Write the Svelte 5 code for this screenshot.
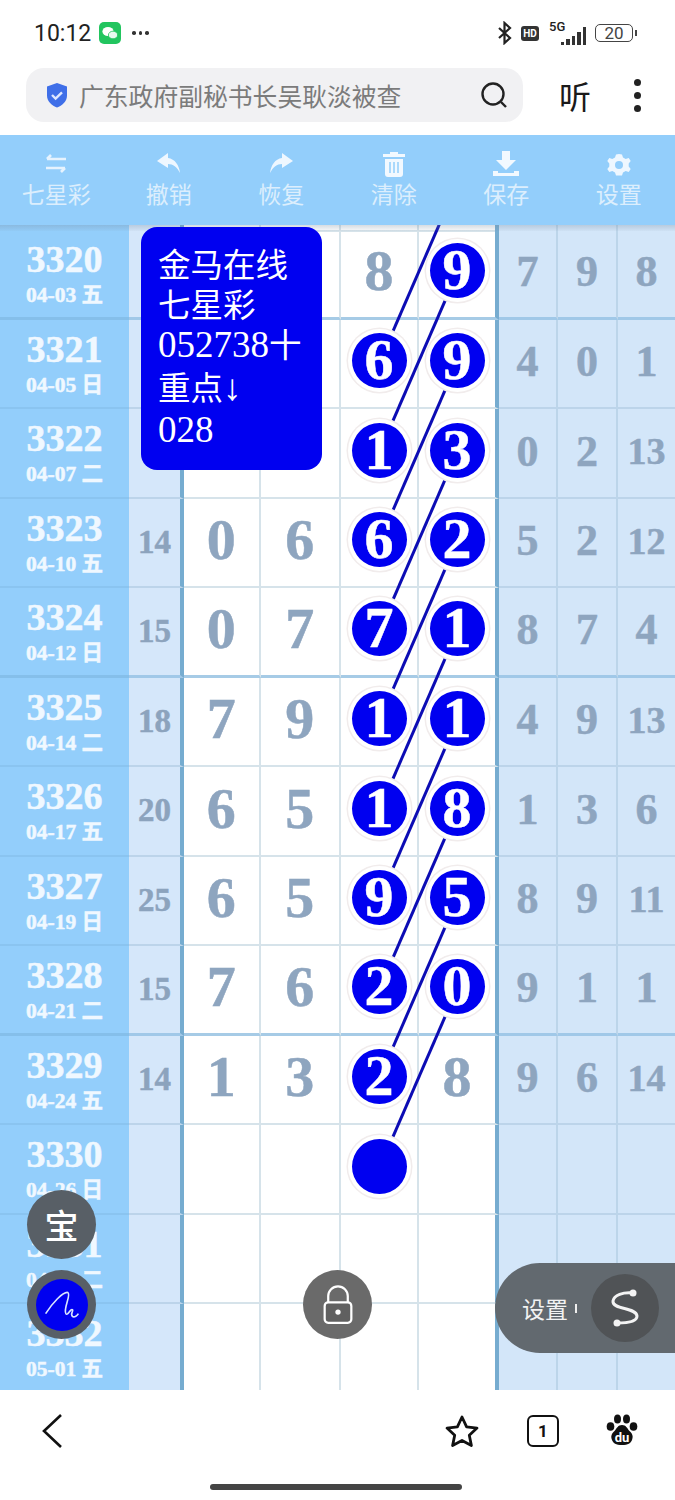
<script lang="ts">
  // rows of the trend table: [issue, date, sum, a, b, c, d, x, y, z]; * marks a drawn ball
  const rows = [
    ['3320', '04-03 五', '', '', '', '8', '9*', '7', '9', '8'],
    ['3321', '04-05 日', '', '', '', '6*', '9*', '4', '0', '1'],
    ['3322', '04-07 二', '', '', '', '1*', '3*', '0', '2', '13'],
    ['3323', '04-10 五', '14', '0', '6', '6*', '2*', '5', '2', '12'],
    ['3324', '04-12 日', '15', '0', '7', '7*', '1*', '8', '7', '4'],
    ['3325', '04-14 二', '18', '7', '9', '1*', '1*', '4', '9', '13'],
    ['3326', '04-17 五', '20', '6', '5', '1*', '8*', '1', '3', '6'],
    ['3327', '04-19 日', '25', '6', '5', '9*', '5*', '8', '9', '11'],
    ['3328', '04-21 二', '15', '7', '6', '2*', '0*', '9', '1', '1'],
    ['3329', '04-24 五', '14', '1', '3', '2*', '8', '9', '6', '14'],
    ['3330', '04-26 日', '', '', '', '*', '', '', '', ''],
    ['3331', '04-28 二', '', '', '', '', '', '', '', ''],
    ['3332', '05-01 五', '', '', '', '', '', '', '', ''],
  ].map((r) => ({
    issue: r[0],
    date: r[1],
    sum: r[2],
    a: r[3],
    b: r[4],
    c: r[5],
    d: r[6],
    right: r.slice(7),
  }))

  const tools = ['七星彩', '撤销', '恢复', '清除', '保存', '设置']

  const rowH = 89.5
  const top = 5
  const ballY = (i: number) => top + rowH * i + 41.6

  // each line runs from a ball in column d down to the ball two rows below in column c
  const links = [-1, 0, 1, 2, 3, 4, 5, 6, 7, 8].map((i) => ({
    y1: ballY(i),
    y2: ballY(i + 2),
  }))

  const isBall = (v: string) => v.endsWith('*')
  const num = (v: string) => v.replace('*', '')
</script>

<div class="phone">
  <div class="status">
    <span class="time">10:12</span>
    <svg class="wechat" viewBox="0 0 22 22" width="22" height="22">
      <rect width="22" height="22" rx="5" fill="#22c55f" />
      <ellipse cx="9" cy="9.500" rx="5.600" ry="4.600" fill="#fff" />
      <ellipse cx="14" cy="13" rx="4.600" ry="3.800" fill="#e9f9ef" stroke="#22c55f" stroke-width="0.800" />
    </svg>
    <span class="more">
      <i></i><i></i><i></i>
    </span>
    <span class="spacer"></span>
    <svg class="bt" viewBox="0 0 16 24" width="16" height="24">
      <path d="M2 7l11 10-5.500 5V2L13 7 2 17" fill="none" stroke="#222" stroke-width="2.200" />
    </svg>
    <span class="hd">HD</span>
    <span class="net">
      <span class="five-g">5G</span>
      <span class="bars"><i></i><i></i><i></i><i></i><i></i></span>
    </span>
    <span class="battery">20</span>
    <span class="nub"></span>
  </div>

  <div class="topbar">
    <div class="search">
      <svg viewBox="0 0 24 26" width="24" height="26">
        <path d="M12 1l10 3.500v9c0 6-5 10-10 12-5-2-10-6-10-12v-9z" fill="#3f6fe8" />
        <path d="M7 13l3.600 3.600L17 10.400" fill="none" stroke="#dfe8ff" stroke-width="2.400" />
      </svg>
      <span class="query">广东政府副秘书长吴耿淡被查</span>
      <svg class="lens" viewBox="0 0 28 28" width="28" height="28">
        <circle cx="13" cy="13" r="10.500" fill="none" stroke="#222" stroke-width="2.400" />
        <path d="M21 21l5 5" stroke="#222" stroke-width="2.400" />
      </svg>
    </div>
    <span class="listen">听</span>
    <span class="menu"><i></i><i></i><i></i></span>
  </div>

  <div class="tools">
    {#each tools as label, i}
      <div class="tool">
        <svg viewBox="0 0 28 26" width="28" height="26">
          {#if i === 0}
            <path d="M5 8h19M9 4L5 8M23 17H4M19 21l4-4" fill="none" stroke="#e6f3fe" stroke-width="2.600" />
          {:else if i === 1}
            <path d="M13 2L2 10l11 7v-4c5 0 9 3 12 9-1-8-5-14-12-15z" fill="#eef7ff" />
          {:else if i === 2}
            <path d="M15 2l11 8-11 7v-4C10 13 6 16 3 22c1-8 5-14 12-15z" fill="#eef7ff" />
          {:else if i === 3}
            <path d="M10 1h8v2h7v3H3V3h7zM5 8h18v15a3 3 0 0 1-3 3H8a3 3 0 0 1-3-3z" fill="#f2f9ff" />
            <path d="M10 11v11M14 11v11M18 11v11" stroke="#93cefb" stroke-width="1.500" />
          {:else if i === 4}
            <path d="M10 0h8v9h6L14 19 4 9h6zM1 20h5v2h16v-2h5v5H1z" fill="#f2f9ff" />
          {:else}
            <path d="M14 3l3 .5 1 3 2.700 1.500 3-1 2 3-2 2.500v3l2 2.500-2 3-3-1L18 21.500l-1 3h-6l-1-3-2.700-1.500-3 1-2-3 2-2.500v-3l-2-2.500 2-3 3 1L10 6.500l1-3z" fill="#eef7ff" />
            <circle cx="14" cy="14" r="4" fill="#93cefb" />
          {/if}
        </svg>
        <span>{label}</span>
      </div>
    {/each}
  </div>

  <div class="table">
    <div class="stub"><div class="side"></div><div class="sum"></div><div class="cell"></div><div class="cell"></div><div class="cell"></div><div class="cell end"></div><div class="r"></div><div class="r"></div><div class="r"></div></div>

    {#each rows as row, i}
      <div class="row" class:thick={i % 4 === 0}>
        <div class="side">
          <span class="issue">{row.issue}</span>
          <span class="date">{row.date}</span>
        </div>
        <div class="sum">{row.sum}</div>
        <div class="cell">{row.a}</div>
        <div class="cell">{row.b}</div>
        {#each [row.c, row.d] as v, k}
          <div class="cell" class:end={k === 1}>
            {#if isBall(v)}
              <span class="ball">{num(v)}</span>
            {:else}
              {v}
            {/if}
          </div>
        {/each}
        {#each row.right as v}
          <div class="r" class:small={v.length > 1}>{v}</div>
        {/each}
      </div>
    {/each}

    <svg class="links" width="675" height="1165" viewBox="0 0 675 1165">
      {#each links as l}
        <line x1="457.700" y1={l.y1} x2="380" y2={l.y2} />
      {/each}
    </svg>

    <div class="shade"></div>
  </div>

  <div class="nav">
    <svg class="back" viewBox="0 0 22 34" width="22" height="34">
      <path d="M20 1L3 17l17 16" fill="none" stroke="#111" stroke-width="2.600" />
    </svg>
    <span class="spacer"></span>
    <svg class="star" viewBox="0 0 36 34" width="36" height="34">
      <path d="M18 3l4.600 9.800 10.400 1.300-7.700 7.200 2.100 10.300L18 26.500 8.600 31.600l2.100-10.300L3 14.100l10.400-1.300z" fill="none" stroke="#111" stroke-width="2.800" stroke-linejoin="round" />
    </svg>
    <span class="tabs">1</span>
    <svg class="paw" viewBox="0 0 32 32" width="32" height="32">
      <ellipse cx="4.500" cy="12.500" rx="3.800" ry="4.300" fill="#111" />
      <ellipse cx="11.500" cy="5" rx="3.500" ry="4.500" fill="#111" />
      <ellipse cx="20.500" cy="5" rx="3.500" ry="4.500" fill="#111" />
      <ellipse cx="27.500" cy="12.500" rx="3.800" ry="4.300" fill="#111" />
      <path d="M16 11c4 0 5 3 7.500 6 3 3 4 5 2.500 9-1 3-4 5-10 5S7 29 6 26c-1.500-4-.5-6 2.500-9C11 14 12 11 16 11z" fill="#111" />
      <text x="16" y="28" class="du">du</text>
    </svg>
    <div class="home"></div>
  </div>

  <div class="note">
    <div>金马在线</div>
    <div>七星彩</div>
    <div><span class="dg">052738</span>十</div>
    <div>重点<span class="dg">↓</span></div>
    <div><span class="dg">028</span></div>
  </div>

  <div class="fab bao">宝</div>
  <div class="fab pen">
    <span class="pen-in">
      <svg viewBox="0 0 54 54" width="52" height="52">
        <path d="M10 36C17 25 28 13 33 14c4 2-5 17-2 22 2 3 5-6 7-4 1 2-3 4 0 7 2 1 5-1 6-3" fill="none" stroke="#d8e4ff" stroke-width="1.700" />
      </svg>
    </span>
  </div>
  <div class="fab lock">
    <svg viewBox="0 0 36 44" width="32" height="40">
      <path d="M7 19v-7a11 11 0 0 1 22 0v7" fill="none" stroke="#fff" stroke-width="2.500" />
      <rect x="3" y="19" width="30" height="23" rx="4" fill="#606060" stroke="#fff" stroke-width="2.500" />
      <circle cx="18" cy="30" r="3" fill="#fff" />
    </svg>
  </div>
  <div class="pill">
    <span class="pill-label">设置</span>
    <span class="tick"></span>
    <span class="s-btn">
      <svg viewBox="0 0 40 44" width="40" height="44">
        <path d="M28 7C18 6 9 9 8 15 7 24 31 21 32 30 32 36 22 37 12 37" fill="none" stroke="#f3f3f3" stroke-width="3" />
        <circle cx="28" cy="7" r="3.500" fill="#f3f3f3" />
        <circle cx="12" cy="37" r="3.500" fill="#f3f3f3" />
      </svg>
    </span>
  </div>
</div>

<style>
  :global(body) {
    margin: 0;
    background: #fff;
  }

  .phone {
    position: relative;
    width: 675px;
    height: 1500px;
    overflow: hidden;
    display: flex;
    flex-direction: column;
    font-family: 'Noto Sans CJK SC', 'Noto Sans', sans-serif;
  }

  .spacer {
    flex: 1;
  }

  .status {
    height: 66px;
    display: flex;
    align-items: center;
    padding: 0 38px 0 34px;
    color: #222;
  }

  .time {
    font: 23px Roboto, sans-serif;
    margin-right: 8px;
  }

  .more {
    display: flex;
    gap: 3px;
    margin-left: 11px;
  }

  .more i {
    width: 3.500px;
    height: 3.500px;
    border-radius: 50%;
    background: #333;
  }

  .bt {
    margin-right: 8px;
  }

  .hd {
    width: 18px;
    height: 15px;
    background: #333;
    border-radius: 3px;
    color: #fff;
    font: bold 10px/15px Roboto, sans-serif;
    text-align: center;
    margin-right: 9px;
  }

  .net {
    position: relative;
    width: 38px;
    height: 24px;
    margin-right: 9px;
  }

  .five-g {
    position: absolute;
    left: 1px;
    top: 0;
    font: 500 13px/12px Roboto, sans-serif;
    color: #222;
  }

  .bars {
    position: absolute;
    right: 0;
    bottom: 0;
    display: flex;
    align-items: flex-end;
    gap: 2px;
  }

  .bars i {
    width: 3.500px;
    background: #333;
  }

  .bars i:nth-child(1) { height: 3px; }
  .bars i:nth-child(2) { height: 6px; }
  .bars i:nth-child(3) { height: 9px; }
  .bars i:nth-child(4) { height: 13px; }
  .bars i:nth-child(5) { height: 18px; }

  .battery {
    width: 36px;
    height: 16px;
    border: 1.500px solid #444;
    border-radius: 5px;
    font: 17px/16px Roboto, sans-serif;
    color: #444;
    text-align: center;
  }

  .nub {
    width: 2px;
    height: 6px;
    margin-left: 2px;
    background: #444;
  }

  .topbar {
    height: 69px;
    padding: 2px 34px 13px 26px;
    box-sizing: border-box;
    display: flex;
    align-items: center;
  }

  .search {
    width: 497px;
    height: 54px;
    box-sizing: border-box;
    padding: 0 15px 0 19px;
    background: #f1f1f3;
    border-radius: 18px;
    display: flex;
    align-items: center;
  }

  .query {
    margin-left: 10px;
    flex: 1;
    font-size: 24.800px;
    color: #7b7b7b;
    white-space: nowrap;
  }

  .listen {
    margin-left: 36px;
    font-size: 32px;
    color: #1a1a1a;
  }

  .menu {
    margin-left: auto;
    display: flex;
    flex-direction: column;
    gap: 6px;
  }

  .menu i {
    width: 7px;
    height: 7px;
    border-radius: 50%;
    background: #222;
  }

  .tools {
    height: 90px;
    background: #93cefb;
    display: grid;
    grid-template-columns: repeat(6, 1fr);
    position: relative;
    z-index: 3;
  }

  .tool {
    display: flex;
    flex-direction: column;
    align-items: center;
    padding-top: 16px;
    color: #dceefd;
    font-size: 23px;
    line-height: 32px;
  }

  .table {
    position: relative;
    flex: 1;
    overflow: hidden;
    font-family: 'Liberation Serif', 'Noto Sans CJK SC', serif;
    font-weight: bold;
    background: #fff;
    -webkit-text-stroke: 0.500px currentColor;
  }

  .row,
  .stub {
    display: grid;
    grid-template-columns: 129px 55px 76.500px 80.500px 78px 80px 59px 60px 57px;
    height: 89.500px;
  }

  .stub {
    height: 5px;
  }

  .row > div,
  .stub > div {
    box-sizing: border-box;
    border-bottom: 2px solid #d6e3ea;
  }

  .row.thick > div {
    border-bottom: 3px solid #a6cbe6;
  }

  .row > .side,
  .stub > .side {
    border-bottom-color: #8ac4f0;
  }

  .row.thick > .side {
    border-bottom: 3px solid #85bfea;
  }

  .row > .sum,
  .row > .r,
  .stub > .sum,
  .stub > .r {
    border-bottom-color: #bcd4ea;
  }

  .row.thick > .sum,
  .row.thick > .r {
    border-bottom-color: #a0c8e8;
  }

  .side {
    background: #93cefb;
    color: #f0f8ff;
    display: flex;
    flex-direction: column;
    align-items: center;
  }

  .issue {
    font-size: 38px;
    line-height: 44px;
    margin-top: 7px;
  }

  .date {
    font-size: 21.500px;
    line-height: 26px;
    margin-top: 1px;
  }

  .sum {
    background: #d5e7fa;
    border-right: 4px solid #76acd0;
    color: #8ca3bd;
    font-size: 33px;
    display: flex;
    align-items: center;
    justify-content: center;
  }

  .cell {
    border-right: 2px solid #d6e3ea;
    color: #8ea5bf;
    font-size: 58px;
    display: flex;
    align-items: center;
    justify-content: center;
    padding-bottom: 5px;
  }

  .cell.end {
    border-right: 4px solid #76acd0;
  }

  .r {
    background: #d3e6f9;
    border-right: 2px solid #bcd5ea;
    color: #8ea5bf;
    font-size: 44px;
    display: flex;
    align-items: center;
    justify-content: center;
    padding-bottom: 3px;
  }

  .r:last-child {
    border-right: 0;
  }

  .r.small {
    font-size: 38px;
  }

  .ball {
    position: relative;
    z-index: 2;
    width: 55px;
    height: 55px;
    border-radius: 50%;
    background: #0000f0;
    color: #fff;
    font-size: 58px;
    line-height: 53px;
    text-align: center;
    box-shadow: 0 0 0 4px #fff, 0 0 0 5.500px #f1ecec;
  }

  .links {
    position: absolute;
    left: 0;
    top: 0;
    z-index: 1;
  }

  .links line {
    stroke: #0c0cb4;
    stroke-width: 3;
  }

  .shade {
    position: absolute;
    left: 0;
    right: 0;
    top: 0;
    height: 6px;
    background: linear-gradient(rgba(120, 140, 160, 0.3), rgba(120, 140, 160, 0.05));
    z-index: 3;
  }

  .nav {
    position: relative;
    height: 110px;
    background: #fff;
    box-sizing: border-box;
    padding: 24px 37px 0 41px;
    display: flex;
    align-items: flex-start;
  }

  .star {
    margin-right: 47px;
  }

  .tabs {
    width: 28px;
    height: 28px;
    border: 2.500px solid #111;
    border-radius: 6px;
    margin-right: 47px;
    font: bold 17px/28px Roboto, sans-serif;
    text-align: center;
    color: #111;
    margin-top: 1px;
  }

  .du {
    font: bold 13px Roboto, sans-serif;
    fill: #fff;
    text-anchor: middle;
  }

  .home {
    position: absolute;
    left: 210px;
    top: 94px;
    width: 252px;
    height: 6px;
    border-radius: 3px;
    background: #444;
  }

  .note {
    position: absolute;
    left: 141px;
    top: 227px;
    width: 181px;
    height: 243px;
    box-sizing: border-box;
    padding: 16px 0 0 17px;
    background: #0000f0;
    border-radius: 16px;
    color: #fff;
    font-size: 32.500px;
    line-height: 40.200px;
    z-index: 4;
    white-space: nowrap;
  }

  .dg {
    font-family: 'Liberation Serif', serif;
    font-size: 37px;
  }

  .fab {
    position: absolute;
    width: 69px;
    height: 69px;
    border-radius: 50%;
    display: flex;
    align-items: center;
    justify-content: center;
    z-index: 5;
  }

  .bao {
    left: 27px;
    top: 1190px;
    background: #585f66;
    color: #fff;
    font-size: 34px;
    font-weight: 500;
  }

  .pen {
    left: 27px;
    top: 1270px;
    background: #585f66;
  }

  .pen-in {
    width: 52px;
    height: 52px;
    border-radius: 50%;
    background: #0000f0;
  }

  .lock {
    left: 303px;
    top: 1270px;
    background: #6a6a6a;
  }

  .pill {
    position: absolute;
    left: 495px;
    top: 1263px;
    width: 180px;
    height: 90px;
    box-sizing: border-box;
    padding-left: 27px;
    border-radius: 45px 0 0 45px;
    background: #62696f;
    display: flex;
    align-items: center;
    z-index: 5;
  }

  .pill-label {
    font-size: 23px;
    color: #f2f2f2;
  }

  .tick {
    width: 2px;
    height: 9px;
    margin-left: 7px;
    background: #eee;
  }

  .s-btn {
    width: 68px;
    height: 68px;
    margin-left: 14px;
    border-radius: 50%;
    background: #505356;
    display: flex;
    align-items: center;
    justify-content: center;
  }
</style>
